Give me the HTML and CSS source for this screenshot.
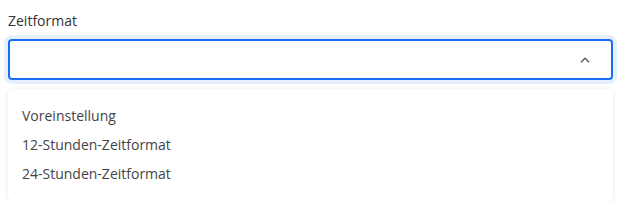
FILE: index.html
```html
<!DOCTYPE html>
<html lang="de">
<head>
<meta charset="utf-8">
<link rel="stylesheet" href="styles.css">
</head>
<body>
<div class="field">
  <label class="label">Zeitformat</label>
  <div class="select">
    <span class="value"></span>
    <svg class="chev" width="10" height="6" viewBox="0 0 10 6"><path d="M1 5.2 L5 1.2 L9 5.2" fill="none" stroke="#555" stroke-width="1.3"/></svg>
  </div>
  <ul class="menu">
    <li>Voreinstellung</li>
    <li>12-Stunden-Zeitformat</li>
    <li>24-Stunden-Zeitformat</li>
  </ul>
</div>
</body>
</html>
```
FILE: styles.css
```css
html, body { margin: 0; padding: 0; background: #fff; }
body { font-family: "Open Sans", "Noto Sans", sans-serif; color: #333; }
.field { padding: 11px 12px 0 8px; display: flex; flex-direction: column; }
.label { font-size: 14px; line-height: 20px; color: #333; margin-bottom: 8px; }
.select {
  height: 37px;
  border: 2px solid #1a6cf5;
  border-radius: 4px;
  box-shadow: 0 0 0 4px #e6f0fd;
  display: flex; align-items: center; justify-content: flex-end;
  padding-right: 21px;
}
.chev { display: block; }
.menu {
  list-style: none; margin: 9px 0 0 0; padding: 12px 14px 16px;
  background: #fff; border-radius: 5px;
  box-shadow: 0 1px 6px rgba(0,0,0,0.08), 0 0 2px rgba(0,0,0,0.05);
  height: 84px;
}
.menu li { font-size: 14px; line-height: 29px; color: #444; }
```
